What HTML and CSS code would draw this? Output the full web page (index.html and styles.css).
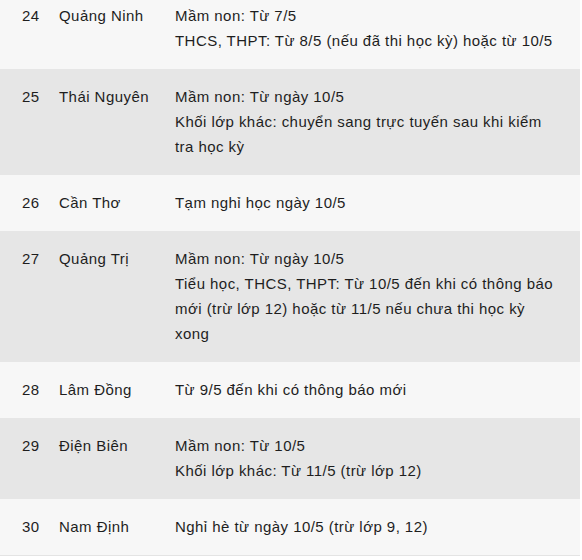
FILE: index.html
```html
<!DOCTYPE html>
<html lang="vi">
<head>
<meta charset="utf-8">
<link rel="stylesheet" href="styles.css">
</head>
<body>
<table class="schedule">
  <colgroup>
    <col class="c-num"><col class="c-name"><col class="c-info">
  </colgroup>
  <tbody>
    <tr class="light"><td class="num">24</td><td>Quảng Ninh</td><td>Mầm non: Từ 7/5<br>THCS, THPT: Từ 8/5 (nếu đã thi học kỳ) hoặc từ 10/5</td></tr>
    <tr class="dark"><td class="num">25</td><td>Thái Nguyên</td><td>Mầm non: Từ ngày 10/5<br>Khối lớp khác: chuyển sang trực tuyến sau khi kiểm<br>tra học kỳ</td></tr>
    <tr class="light"><td class="num">26</td><td>Cần Thơ</td><td>Tạm nghỉ học ngày 10/5</td></tr>
    <tr class="dark"><td class="num">27</td><td>Quảng Trị</td><td>Mầm non: Từ ngày 10/5<br>Tiểu học, THCS, THPT: Từ 10/5 đến khi có thông báo<br>mới (trừ lớp 12) hoặc từ 11/5 nếu chưa thi học kỳ<br>xong</td></tr>
    <tr class="light"><td class="num">28</td><td>Lâm Đồng</td><td>Từ 9/5 đến khi có thông báo mới</td></tr>
    <tr class="dark"><td class="num">29</td><td>Điện Biên</td><td>Mầm non: Từ 10/5<br>Khối lớp khác: Từ 11/5 (trừ lớp 12)</td></tr>
    <tr class="light last"><td class="num">30</td><td>Nam Định</td><td>Nghỉ hè từ ngày 10/5 (trừ lớp 9, 12)</td></tr>
  </tbody>
</table>
</body>
</html>
```
FILE: styles.css
```css
html, body {
  margin: 0;
  padding: 0;
  background: #ffffff;
}
.schedule {
  width: 580px;
  margin-top: -12px;
  border-collapse: collapse;
  table-layout: fixed;
  font-family: "Liberation Sans", Arial, sans-serif;
  font-size: 15px;
  letter-spacing: 0.45px;
  line-height: 25px;
  color: #1e1e1e;
}
.c-num { width: 59px; }
.c-name { width: 116px; }
.c-info { width: 405px; }
.schedule td {
  padding: 15px 0 16px 0;
  vertical-align: top;
  white-space: nowrap;
}
.schedule td.num {
  padding-left: 22px;
}
.light { background: #f7f7f7; }
.dark { background: #e6e6e6; }
.last { border-bottom: 1px solid #e4e4e4; }
```
